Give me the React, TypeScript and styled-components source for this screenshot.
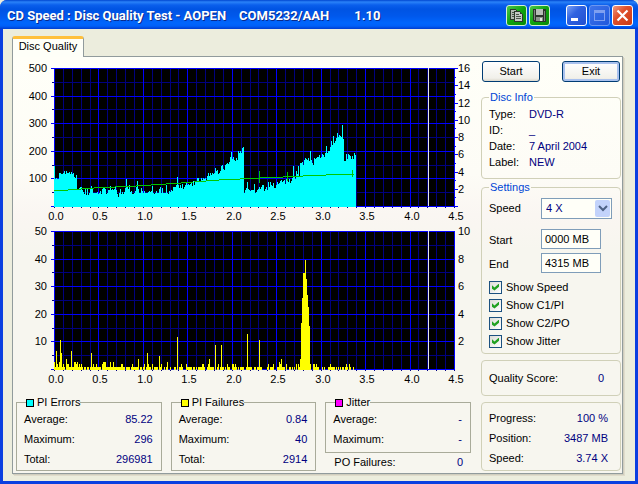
import React from "react";
import styled, { createGlobalStyle } from "styled-components";

const GlobalStyle = createGlobalStyle`
  * {
    box-sizing: border-box;
  }

  body {
    margin: 0;
    background: #eceddd;
    font-family: "Liberation Sans", Arial, sans-serif;
    font-size: 11px;
    line-height: 13px;
    color: #000;
  }

  button, input, select {
    font: inherit;
    color: inherit;
    margin: 0;
  }
`;

const Window = styled.div`
  display: flex;
  flex-direction: column;
  min-height: 100vh;
  background: #0a3fe0;
  border-radius: 7px 7px 0 0;
`;

const TitleBar = styled.header`
  display: flex;
  align-items: center;
  height: 29px;
  padding: 2px 5px 0 7px;
  border-radius: 7px 7px 0 0;
  background: linear-gradient(
    to bottom,
    #0046d0 0,
    #2a82f8 2px,
    #0a5fec 5px,
    #0054e3 9px,
    #0058ec 16px,
    #0066fd 23px,
    #0060f8 26px,
    #003dd0 29px
  );
`;

const Title = styled.h1`
  display: flex;
  flex: 1;
  gap: 13px;
  margin: 0;
  font-family: Roboto, sans-serif;
  font-size: 13px;
  line-height: 18px;
  font-weight: 700;
  color: #fff;
  text-shadow: 1px 1px 0 #0a2a8c;
  white-space: nowrap;
`;

const Version = styled.span`
  margin-left: 12px;
`;

const TitleButtons = styled.div`
  display: flex;
  gap: 2px;
  margin-left: 16px;
`;

const TitleButton = styled.button<{ $color: string; $edge?: string }>`
  display: flex;
  width: 21px;
  height: 21px;
  padding: 0;
  border: 1px solid ${(p) => p.$edge || "#fff"};
  border-radius: 3px;
  background: ${(p) => p.$color};
`;

const Body = styled.main`
  flex: 1;
  margin: 0 3px 3px;
  padding: 7px 12px 7px 9px;
  background: #eceddd;
`;

const Tab = styled.button`
  display: block;
  position: relative;
  width: 72px;
  height: 21px;
  margin-bottom: -1px;
  padding: 0 0 3px;
  border: 1px solid #919b9c;
  border-top: 3px solid #ffc03c;
  border-bottom: 0;
  border-radius: 3px 3px 0 0;
  background: #fefff8;
`;

const Panel = styled.section`
  display: flex;
  gap: 10px;
  padding: 3px 1px 2px 3px;
  border: 1px solid #919b9c;
  background: linear-gradient(to bottom, #fffff8 0, #fdfcf6 28%, #faf6f2 38%, #f7f6ef 46%, #f7f6ef 100%);
  box-shadow: 1px 1px 0 #d0cebf, 2px 2px 0 #e0dccb;
`;

const Results = styled.div`
  flex: 1;
  min-width: 0;
`;

const ChartSvg = styled.svg`
  display: block;
  width: 100%;
  height: auto;
  overflow: visible;
  font-size: 11px;
`;

const Stats = styled.div`
  display: grid;
  grid-template-columns: repeat(3, 1fr);
  gap: 9px;
  margin-top: 10px;
`;

const StatBox = styled.fieldset<{ $bottom: number }>`
  min-width: 0;
  margin: 0;
  padding: 0 8px ${(p) => p.$bottom}px 7px;
  border: 1px solid #a9ab9a;

  legend {
    display: flex;
    align-items: center;
    gap: 3px;
    margin-left: 2px;
    padding: 0;
  }
`;

const Swatch = styled.span<{ $color: string }>`
  width: 8px;
  height: 8px;
  border: 1px solid #000;
  background: ${(p) => p.$color};
`;

const Row = styled.div<{ $height?: number }>`
  display: flex;
  align-items: center;
  justify-content: space-between;
  height: ${(p) => p.$height || 20}px;
  white-space: nowrap;
`;

const Value = styled.output`
  color: #000080;
`;

const PoRow = styled(Row)`
  padding: 0 8px 0 9px;
`;

const Side = styled.aside`
  width: 140px;
`;

const Actions = styled.div`
  display: flex;
  justify-content: space-between;
  margin: 1px 1px 9px;
`;

const Button = styled.button<{ $default?: boolean }>`
  width: 58px;
  height: 21px;
  padding: 0;
  border: 1px solid #003c74;
  border-radius: 3px;
  background: linear-gradient(to bottom, #fff, #f1f0ea 85%, #dcd8cc);
  box-shadow: ${(p) => (p.$default ? "inset 0 0 0 2px #a9c1ee" : "none")};
`;

const Group = styled.fieldset`
  min-width: 0;
  margin: 0;
  padding: 0 8px 0 7px;
  border: 1px solid #d0d0b8;
  border-radius: 4px;

  legend {
    padding: 0 1px;
    color: #0046d5;
  }
`;

const DiscInfo = styled(Group)`
  margin-bottom: 2px;
  padding: 2px 8px 8px 7px;

  dl {
    display: grid;
    grid-template-columns: 40px 1fr;
    margin: 0;
    line-height: 16px;
  }

  dd {
    margin: 0;
    color: #000080;
  }
`;

const Settings = styled(Group)`
  padding: 4px 8px 3px 7px;
`;

const Field = styled.div<{ $gap: number }>`
  display: grid;
  grid-template-columns: 52px 1fr;
  align-items: center;
  margin-bottom: ${(p) => p.$gap}px;
`;

const FieldLabel = styled.label`
  padding-top: 3px;
`;

const SelectWrap = styled.div`
  position: relative;
  width: 71px;
  height: 21px;

  select {
    width: 100%;
    height: 100%;
    padding: 0 4px;
    border: 1px solid #7f9db9;
    border-radius: 0;
    background: #fffff8;
    color: #000080;
    appearance: none;
  }

  svg {
    position: absolute;
    top: 2px;
    right: 2px;
    pointer-events: none;
  }
`;

const TextBox = styled.input`
  width: 60px;
  height: 20px;
  padding: 0 3px;
  border: 1px solid #7f9db9;
  background: #fffff8;
`;

const Check = styled.label`
  display: flex;
  align-items: center;
  gap: 4px;
  height: 18px;

  input {
    display: grid;
    place-items: center;
    width: 13px;
    height: 13px;
    border: 1px solid #1c5180;
    background: linear-gradient(135deg, #dcdcd7, #fff);
    appearance: none;
  }

  input:checked::after {
    content: "";
    width: 7px;
    height: 7px;
    background: #21a121;
    clip-path: polygon(0 25%, 36% 56%, 100% 0, 100% 48%, 36% 100%, 0 74%);
  }
`;

const Score = styled(Group)`
  margin: 6px 0;
  padding: 7px 16px 7px 7px;
`;

const Progress = styled(Group)`
  padding: 5px 12px 2px 7px;
`;

// plot area inside the 455x163 chart
const LEFT = 38;
const TOP = 8;
const WIDTH = 400;
const HEIGHT = 138;

// one sample per column
const piErrors = [
  41, 28, 29, 28, 28, 34, 34, 33, 33, 34, 36, 33, 36, 34, 34, 35, 33, 35, 33, 34, 30, 29, 32,
  18, 18, 19, 20, 20, 17, 15, 13, 18, 12, 18, 12, 14, 18, 21, 18, 14, 14, 14, 14, 15, 13, 14, 16, 13, 18,
  20, 19, 18, 13, 14, 17, 17, 21, 17, 18, 17, 18, 20, 17, 13, 10, 14, 18, 13, 15, 13, 15, 19, 28, 20, 18,
  22, 15, 16, 13, 13, 14, 16, 20, 26, 18, 14, 14, 19, 16, 14, 16, 14, 14, 14, 15, 16, 15, 16, 21, 14, 13,
  14, 16, 14, 14, 18, 20, 14, 19, 14, 14, 14, 22, 14, 13, 16, 15, 17, 16, 20, 20, 20, 22, 30, 22, 19, 22,
  19, 23, 18, 20, 22, 24, 22, 23, 22, 23, 24, 21, 26, 22, 26, 26, 29, 29, 26, 26, 29, 27, 29, 28, 29, 27,
  31, 34, 31, 34, 32, 34, 33, 34, 39, 36, 37, 33, 34, 36, 41, 42, 38, 37, 42, 43, 44, 43, 45, 50, 55, 48,
  50, 47, 46, 49, 47, 56, 54, 56, 54, 59, 60,
  14, 17, 19, 25, 18, 17, 16, 17, 17, 17, 23, 14, 15, 17, 18, 20, 18, 20, 22, 22, 16, 18, 20, 17, 25, 20,
  25, 22, 21, 24, 19, 19, 22, 25, 23, 24, 26, 27, 25, 26, 27, 23, 28, 31, 25, 28, 24, 26, 29, 41, 31, 28,
  36, 33, 41, 31, 44, 44, 45, 42, 47, 49, 48, 47, 49, 46, 56, 47, 44, 42, 49, 48, 49, 50, 50, 52, 49, 50,
  53, 52, 50, 54, 61, 54, 56, 56, 60, 66, 62, 71, 64, 66, 69, 74, 70, 72, 71, 70, 82, 68, 46, 46, 53, 48,
  53, 52, 51, 48, 51, 48, 54, 52,
];

const failurePeaks: Record<number, number> = {
  0: 3, 2: 7, 3: 2, 5: 3, 6: 11, 7: 6, 9: 2, 12: 4, 13: 2, 14: 2, 17: 7, 20: 3, 21: 3, 22: 2, 23: 3, 25: 2,
  27: 2, 37: 6, 39: 2, 42: 2, 48: 2, 49: 3, 50: 3, 51: 3, 56: 3, 59: 3, 67: 2, 68: 2, 78: 2, 84: 4, 90: 2,
  93: 6, 94: 2, 98: 2, 105: 5, 107: 2, 113: 3, 123: 12, 127: 2, 132: 2, 148: 2, 149: 2, 154: 2, 155: 4,
  161: 9, 164: 2, 167: 9, 173: 2, 178: 2, 179: 2, 181: 2, 193: 13, 205: 11, 214: 2, 219: 2, 225: 3, 226: 2,
  227: 4, 232: 2, 242: 2, 244: 2, 246: 4, 247: 17, 248: 26, 249: 35, 250: 35, 251: 40, 252: 33, 253: 27,
  254: 23, 255: 16, 256: 2, 259: 2, 260: 2, 262: 2, 276: 2, 292: 2, 295: 2,
};

const failureGaps = [
  11, 29, 32, 35, 47, 71, 76, 85, 88, 91, 97, 99, 104, 108, 109, 111, 114, 115, 117, 118, 119, 122, 124,
  129, 130, 131, 138, 141, 143, 151, 152, 160, 162, 165, 170, 172, 176, 177, 183, 185, 190, 191, 198, 199,
  202, 208, 209, 210, 211, 212, 215, 220, 221, 222, 231, 233, 234, 237, 239, 241, 243, 257, 258, 265, 266,
  267, 269, 271, 272, 273, 281, 283, 285, 287, 290, 294, 297, 298,
];

const piFailures = Array.from({ length: 300 }, (_, i) =>
  Math.round((failurePeaks[i] ?? (failureGaps.includes(i) ? 0 : 1)) * 2.76)
);

interface ChartProps {
  label: string;
  color: string;
  bars: number[];
  leftLabels: number[];
  rightLabels: number[];
  rightTicks?: boolean;
  children?: React.ReactNode;
}

const xAt = (i: number) => LEFT + Math.round((i * WIDTH) / 45);
const yAt = (i: number, count: number) => TOP + Math.round((i * HEIGHT) / count);

const Chart: React.FC<ChartProps> = ({ label, color, bars, leftLabels, rightLabels, rightTicks, children }) => {
  const columns = Array.from({ length: 46 }, (_, i) => i);
  const lines = Array.from({ length: 11 }, (_, i) => i);
  const bottom = TOP + HEIGHT;
  return (
    <ChartSvg viewBox="0 0 455 163" role="img" aria-label={label}>
      <g shapeRendering="crispEdges">
        <rect x={LEFT} y={TOP} width={WIDTH} height={HEIGHT} fill="#000" />
        {columns.map((i) => (
          <rect key={i} x={xAt(i)} y={TOP} width={1} height={HEIGHT + 2} fill="#000080" />
        ))}
        {lines.map((i) => (
          <rect key={i} x={LEFT - 2} y={yAt(i, 10)} width={WIDTH + 3} height={1} fill="#000080" />
        ))}
        {columns.filter((i) => i % 5 === 0).map((i) => (
          <rect key={i} x={xAt(i)} y={TOP} width={1} height={HEIGHT} fill="#0000ff" />
        ))}
        {lines.filter((i) => i % 2 === 0).map((i) => (
          <rect key={i} x={LEFT - 3} y={yAt(i, 10)} width={WIDTH + 4} height={1} fill="#0000ff" />
        ))}
        {rightTicks &&
          Array.from({ length: 17 }, (_, i) => (
            <rect key={i} x={LEFT + WIDTH} y={yAt(i, 16)} width={i % 2 ? 2 : 4} height={1} fill="#0000ff" />
          ))}
        <rect x={412} y={TOP} width={1} height={HEIGHT} fill="#e8e8e8" />
        <path fill={color} d={bars.map((h, i) => `M${LEFT + i} ${bottom + 1}v${-h}h1v${h}z`).join("")} />
        {children}
      </g>
      {leftLabels.map((n, i) => (
        <text key={n} x={31} y={yAt(i, 5) + 4} textAnchor="end">{n}</text>
      ))}
      {rightLabels.map((n, i) => (
        <text key={n} x={442} y={yAt(i, rightLabels.length) + 4}>{n}</text>
      ))}
      {Array.from({ length: 10 }, (_, i) => (
        <text key={i} x={xAt(i * 5) + 2} y={bottom + 14} textAnchor="middle">{(i / 2).toFixed(1)}</text>
      ))}
    </ChartSvg>
  );
};

interface StatProps {
  name: string;
  color: string;
  rows: [string, string][];
  bottom: number;
}

const Stat: React.FC<StatProps> = ({ name, color, rows, bottom }) => (
  <StatBox $bottom={bottom}>
    <legend>
      <Swatch $color={color} />
      {name}
    </legend>
    {rows.map(([key, value]) => (
      <Row key={key}>
        <span>{key}</span>
        <Value>{value}</Value>
      </Row>
    ))}
  </StatBox>
);

const green = "linear-gradient(135deg, #4cc74c, #0fa30f 50%, #088a08)";
const blue = "linear-gradient(135deg, #7ba2f5, #2f62e0 40%, #2350d0)";
const dimBlue = "linear-gradient(135deg, #3f74ea, #2058dc)";
const red = "linear-gradient(135deg, #f0997f, #e0502c 40%, #cc3a14)";

const App: React.FC = () => (
  <>
    <GlobalStyle />
    <Window>
      <TitleBar>
        <Title>
          <span>CD Speed : Disc Quality Test - AOPEN</span>
          <span>COM5232/AAH</span>
          <Version>1.10</Version>
        </Title>
        <TitleButtons>
          <TitleButton $color={green} $edge="#d4f0d4" aria-label="Copy">
            <svg width="19" height="19" shapeRendering="crispEdges">
              <path d="M3 3h6v1h1v1h1v9H3z" fill="#2c3a2c" />
              <path d="M4 4h5v9H4z" fill="#b4bcb4" />
              <path d="M5 6h3v1H5zM5 8h3v1H5zM5 10h3v1H5z" fill="#4a544a" />
              <path d="M7 5h6v1h1v1h1v1h1v8H7z" fill="#2c3a2c" />
              <path d="M8 6h5v2h2v7H8z" fill="#c4c8c4" />
              <path d="M9 8h3v1H9zM9 10h5v1H9zM9 12h5v1H9z" fill="#4a544a" />
            </svg>
          </TitleButton>
          <TitleButton $color={green} $edge="#d4f0d4" aria-label="Save">
            <svg width="19" height="19" shapeRendering="crispEdges">
              <path d="M3 3h13v13H4v-1H3z" fill="#2c342c" />
              <path d="M4 4h1v10H4zM14 5h1v10h-1z" fill="#7c847c" />
              <path d="M6 3h7v6H6z" fill="#b8beb8" />
              <path d="M6 11h7v4H6z" fill="#8c948c" />
              <path d="M10 12h2v3h-2z" fill="#e0e4e0" />
            </svg>
          </TitleButton>
        </TitleButtons>
        <TitleButtons>
          <TitleButton $color={blue} aria-label="Minimize">
            <svg width="19" height="19">
              <path d="M4 12h7v3H4z" fill="#fff" />
            </svg>
          </TitleButton>
          <TitleButton $color={dimBlue} $edge="#6d97f0" aria-label="Maximize" disabled>
            <svg width="19" height="19" shapeRendering="crispEdges">
              <path d="M4 4h11v11H4zM5 7v7h9V7z" fill="#7f9ff0" fillRule="evenodd" />
            </svg>
          </TitleButton>
          <TitleButton $color={red} aria-label="Close">
            <svg width="19" height="19">
              <path d="M4.500 4.500l10 10M14.500 4.500l-10 10" stroke="#fff" strokeWidth="2.200" />
            </svg>
          </TitleButton>
        </TitleButtons>
      </TitleBar>
      <Body>
        <Tab role="tab" aria-selected="true">Disc Quality</Tab>
        <Panel>
          <Results>
            <Chart
              label="PI errors"
              color="#00ffff"
              bars={piErrors}
              leftLabels={[500, 400, 300, 200, 100]}
              rightLabels={[16, 14, 12, 10, 8, 6, 4, 2]}
              rightTicks
            >
              <polyline
                points="38,131 52,130 78,128 120,126 165,123 203,120 224,119 244,118 267,117 287,116 310,115 338,114"
                fill="none"
                stroke="#00c800"
              />
              <path d="M243 111h1v12h-1zM271 112h1v9h-1zM336 110h1v7h-1z" fill="#00c800" />
            </Chart>
            <Chart
              label="PI failures"
              color="#ffff00"
              bars={piFailures}
              leftLabels={[50, 40, 30, 20, 10]}
              rightLabels={[10, 8, 6, 4, 2]}
            />
            <Stats>
              <Stat
                name="PI Errors"
                color="#00ffff"
                bottom={1}
                rows={[["Average:", "85.22"], ["Maximum:", "296"], ["Total:", "296981"]]}
              />
              <Stat
                name="PI Failures"
                color="#ffff00"
                bottom={1}
                rows={[["Average:", "0.84"], ["Maximum:", "40"], ["Total:", "2914"]]}
              />
              <div>
                <Stat name="Jitter" color="#ff00ff" bottom={3} rows={[["Average:", "-"], ["Maximum:", "-"]]} />
                <PoRow $height={18}>
                  <span>PO Failures:</span>
                  <Value>0</Value>
                </PoRow>
              </div>
            </Stats>
          </Results>
          <Side>
            <Actions>
              <Button>Start</Button>
              <Button $default>Exit</Button>
            </Actions>
            <DiscInfo>
              <legend>Disc Info</legend>
              <dl>
                <dt>Type:</dt>
                <dd>DVD-R</dd>
                <dt>ID:</dt>
                <dd>_</dd>
                <dt>Date:</dt>
                <dd>7 April 2004</dd>
                <dt>Label:</dt>
                <dd>NEW</dd>
              </dl>
            </DiscInfo>
            <Settings>
              <legend>Settings</legend>
              <Field $gap={10}>
                <label htmlFor="speed">Speed</label>
                <SelectWrap>
                  <select id="speed" defaultValue="4">
                    <option value="4">4 X</option>
                  </select>
                  <svg width="15" height="17">
                    <rect width="15" height="17" rx="2" fill="#c3d3fb" />
                    <path d="M4 6l4 4 4-4" fill="none" stroke="#4d6185" strokeWidth="2" />
                  </svg>
                </SelectWrap>
              </Field>
              <Field $gap={4}>
                <FieldLabel htmlFor="start">Start</FieldLabel>
                <TextBox id="start" defaultValue="0000 MB" />
              </Field>
              <Field $gap={5}>
                <FieldLabel htmlFor="end">End</FieldLabel>
                <TextBox id="end" defaultValue="4315 MB" />
              </Field>
              {["Show Speed", "Show C1/PI", "Show C2/PO", "Show Jitter"].map((name) => (
                <Check key={name}>
                  <input type="checkbox" defaultChecked />
                  {name}
                </Check>
              ))}
            </Settings>
            <Score as="div">
              <Row>
                <span>Quality Score:</span>
                <Value>0</Value>
              </Row>
            </Score>
            <Progress as="div">
              <Row>
                <span>Progress:</span>
                <Value>100 %</Value>
              </Row>
              <Row>
                <span>Position:</span>
                <Value>3487 MB</Value>
              </Row>
              <Row>
                <span>Speed:</span>
                <Value>3.74 X</Value>
              </Row>
            </Progress>
          </Side>
        </Panel>
      </Body>
    </Window>
  </>
);

export default App;
